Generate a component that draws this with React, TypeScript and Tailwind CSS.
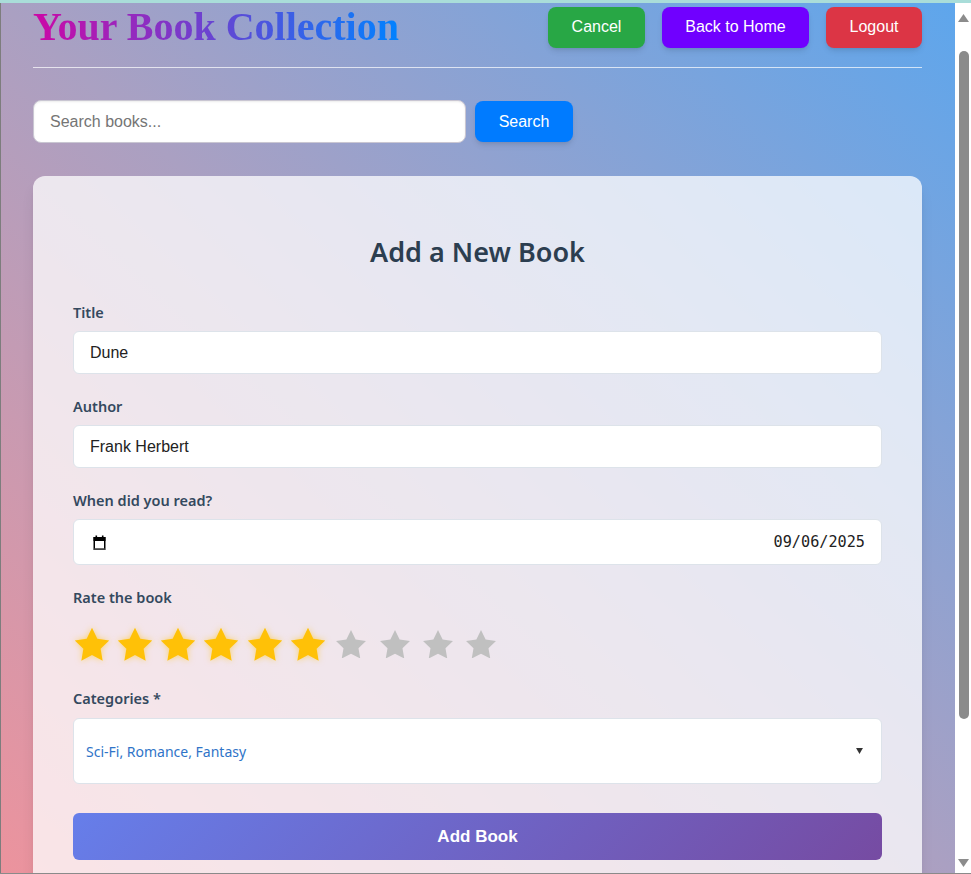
import React from "react";

const STAR = "12,2 15.09,8.26 22,9.27 17,14.14 18.18,21.02 12,17.77 5.82,21.02 7,14.14 2,9.27 8.91,8.26";

function Star({ on }: { on: boolean }) {
  return (
    <svg
      viewBox="2 2 20 19.02"
      className={
        on
          ? "w-[30px] h-[28.5px] shrink-0 scale-[1.15] drop-shadow-[0_0_3px_rgba(255,193,7,0.55)]"
          : "w-[30px] h-[28.5px] shrink-0"
      }
    >
      <polygon points={STAR} fill={on ? "#ffc107" : "#c0c0c0"} />
    </svg>
  );
}

function Label({ children, mb = "mb-[9px]" }: { children: React.ReactNode; mb?: string }) {
  return (
    <div
      className={`h-[20px] leading-[20px] text-[14.5px] font-semibold text-[#34495e] ${mb}`}
      style={{ fontFamily: '"Noto Sans", sans-serif' }}
    >
      {children}
    </div>
  );
}

export default function App() {
  return (
    <div className="w-[971px] h-[874px] flex flex-col overflow-hidden bg-white">
      <div className="h-[3px] bg-[#a9ddd9] shrink-0" />
      <div className="flex flex-1 min-h-0">
        <div className="w-px bg-[#7d7d7d] shrink-0" />
        <main
          className="flex-1 min-w-0 pl-8 pr-[33px] pt-px overflow-hidden bg-[linear-gradient(to_top_right,#ec939d,#aaa0c2_50%,#5ea6ec)]"
          style={{ fontFamily: '"Liberation Sans", Arial, sans-serif' }}
        >
          {/* Header */}
          <div className="flex items-center justify-between h-[46px]">
            <h1
              className="text-[40px] leading-[46px] font-bold bg-[linear-gradient(to_right,#cc08a6,#0082ff)] bg-clip-text text-transparent"
              style={{ fontFamily: '"Liberation Serif", "Times New Roman", serif' }}
            >
              Your Book Collection
            </h1>
            <div className="flex items-center gap-[17px]">
              <button className="w-[97px] h-[41px] rounded-lg bg-[#28a745] text-white text-[16px] shadow-md">
                Cancel
              </button>
              <button className="w-[147px] h-[41px] rounded-lg bg-[#7000ff] text-white text-[16px] shadow-md">
                Back to Home
              </button>
              <button className="w-[96px] h-[41px] rounded-lg bg-[#dc3545] text-white text-[16px] shadow-md">
                Logout
              </button>
            </div>
          </div>
          <div className="mt-[17px] h-px bg-white/70" />

          {/* Search */}
          <div className="mt-[32px] flex items-center gap-[9px]">
            <div className="w-[433px] h-[43px] rounded-lg bg-white border border-[#c9c6d2] flex items-center pl-4 text-[16px] text-[#757575] shadow-[inset_0_1px_2px_rgba(0,0,0,0.08)]">
              Search books...
            </div>
            <button className="w-[98px] h-[41px] rounded-lg bg-[#007bff] text-white text-[16px] shadow-md">
              Search
            </button>
          </div>

          {/* Card */}
          <div className="mt-[33px] rounded-xl bg-white/75 shadow-lg px-10 pt-[59px] pb-10 h-[800px]">
            <h2
              className="h-[34px] leading-[34px] text-center text-[27px] font-semibold text-[#2c3e50]"
              style={{ fontFamily: '"Noto Sans", sans-serif' }}
            >
              Add a New Book
            </h2>

            <div className="mt-[33px]">
              <Label>Title</Label>
              <div className="h-[43px] rounded-md bg-white border border-[#dde3ea] flex items-center pl-4 text-[16px] text-[#222]">
                Dune
              </div>
            </div>

            <div className="mt-[22px]">
              <Label>Author</Label>
              <div className="h-[43px] rounded-md bg-white border border-[#dde3ea] flex items-center pl-4 text-[16px] text-[#222]">
                Frank Herbert
              </div>
            </div>

            <div className="mt-[22px]">
              <Label>When did you read?</Label>
              <div className="h-[46px] rounded-md bg-white border border-[#dde3ea] flex items-center justify-between pl-[19px] pr-4">
                <svg viewBox="0 0 13 15" className="w-[13px] h-[15px]">
                  <rect x="2.5" y="0.5" width="1.6" height="3" fill="#000" />
                  <rect x="8.9" y="0.5" width="1.6" height="3" fill="#000" />
                  <rect x="0.5" y="2" width="12" height="4" fill="#000" />
                  <rect x="1.25" y="2.75" width="10.5" height="11.5" fill="none" stroke="#000" strokeWidth="1.5" />
                  <rect x="1" y="13.5" width="11" height="1.3" fill="#555" />
                </svg>
                <span
                  className="text-[15.2px] text-[#222]"
                  style={{ fontFamily: '"DejaVu Sans Mono", monospace' }}
                >
                  09/06/2025
                </span>
              </div>
            </div>

            <div className="mt-[22px]">
              <Label mb="mb-0">Rate the book</Label>
              <div className="mt-[15px] h-[44px] flex items-center gap-[13.3px] pl-[3.5px]">
                {Array.from({ length: 10 }).map((_, i) => (
                  <Star key={i} on={i < 6} />
                ))}
              </div>
            </div>

            <div className="mt-[22px]">
              <Label mb="mb-[10px]">Categories *</Label>
              <div className="h-[66px] rounded-md bg-white border border-[#dde3ea] flex items-center justify-between pl-3 pr-[18px]">
                <span
                  className="text-[14px] text-[#2f74c8]"
                  style={{ fontFamily: '"Noto Sans", sans-serif' }}
                >
                  Sci-Fi, Romance, Fantasy
                </span>
                <svg viewBox="0 0 8 7" className="w-[7px] h-[6px]">
                  <polygon points="0,0 8,0 4,7" fill="#333" />
                </svg>
              </div>
            </div>

            <button className="mt-[29px] w-full h-[47px] rounded-md bg-[linear-gradient(135deg,#667eea,#764ba2)] text-white text-[17px] font-bold">
              Add Book
            </button>
          </div>
        </main>
        {/* scrollbar */}
        <div className="w-4 shrink-0 bg-white relative">
          <svg viewBox="0 0 11 8" className="absolute left-[3px] top-[11px] w-[11px] h-[8px]">
            <polygon points="0,8 11,8 5.5,0" fill="#8c8c8c" />
          </svg>
          <div className="absolute left-[4px] top-[48px] w-[10px] h-[668px] rounded-full bg-[#8b8b8b]" />
          <svg viewBox="0 0 11 8" className="absolute left-[3px] top-[856px] w-[11px] h-[8px]">
            <polygon points="0,0 11,0 5.5,8" fill="#8c8c8c" />
          </svg>
        </div>
      </div>
      <div className="h-px bg-[#8a8a8a] shrink-0" />
    </div>
  );
}
